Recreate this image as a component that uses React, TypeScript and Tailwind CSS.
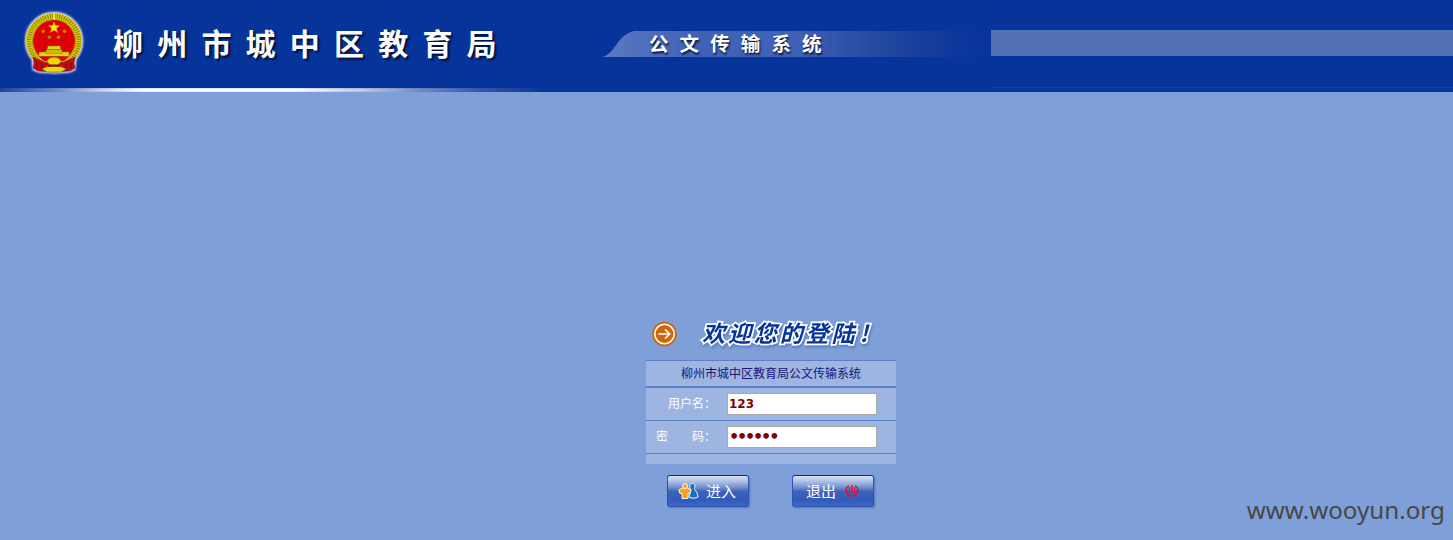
import { useState } from 'react';

const cjk = "font-['Noto_Sans_CJK_SC',sans-serif]";

function Emblem() {
  return (
    <svg width="64" height="66" viewBox="0 0 64 66" className="shrink-0">
      <defs>
        <filter id="glow" x="-20%" y="-20%" width="140%" height="140%">
          <feGaussianBlur stdDeviation="1" />
        </filter>
      </defs>
      <g fill="#fff" stroke="#fff" strokeWidth="3" filter="url(#glow)">
        <circle cx="32" cy="31" r="27.5" />
        <path d="M11 46h42l-1 13-5 2-15 1-15-1-5-2z" />
      </g>
      <circle cx="32" cy="31" r="28" fill="#d8c80c" />
      <circle cx="32" cy="31" r="25" fill="none" stroke="#8e8208" strokeWidth="4.5" strokeDasharray="1 1.400" />
      <circle cx="32" cy="31" r="21.6" fill="#f0dc10" stroke="#927b08" strokeWidth=".7" />
      <circle cx="32" cy="31" r="21" fill="#da0006" />
      <path d="M31.500 3h1.400v7h-1.400z" fill="#fff45a" />
      <path d="M32 12l1.300 3.800h4l-3.100 2.500 1.200 4L32 19.900l-3.400 2.400 1.200-4-3.100-2.500h4z" fill="#ffe900" stroke="#ffb638" strokeWidth=".6" />
      <g fill="#b78a05">
        <circle cx="21.200" cy="21.200" r="1.700" />
        <circle cx="42.500" cy="21.200" r="1.700" />
        <circle cx="27.500" cy="27.300" r="1.700" />
        <circle cx="36.500" cy="27.300" r="1.700" />
      </g>
      <path d="M26 36h12l1 3.500H25zM24 40h16v3.500H24zM17 42h30v4.500H17z" fill="#e5d20c" stroke="#8e7605" strokeWidth=".5" />
      <path d="M17 46.500h30L42 51H22z" fill="#da0006" />
      <path d="M11 47l4 2 8 3.500h18l8-3.500 4-2-1 6 1 5-5 3-16 1-16-1-5-3 1-5z" fill="#c70812" stroke="#84101d" strokeWidth=".6" />
      <path d="M15 52v7M20 54v7M44 54v7M49 52v7" stroke="#6e1231" strokeWidth="1.200" />
      <path d="M25 52a7 4.800 0 0 1 14 0l-3 2.500h-8zM20 59c6-4 18-4 24 0l-5 3H25z" fill="#ecd70c" stroke="#8e7605" strokeWidth=".6" />
      <path d="M26 56h12" stroke="#850b10" strokeWidth="1.400" />
    </svg>
  );
}

function Header() {
  return (
    <header className="flex h-[92px] flex-col bg-[#07349b]">
      <div className="flex h-[88px] items-start">
        <div className="flex w-[602px] shrink-0 items-start pl-[22px] pt-[10px]">
          <Emblem />
          <h1 className={`${cjk} ml-[27px] mt-[12px] whitespace-nowrap text-[30px] leading-[40px] font-bold tracking-[14.2px] text-white [text-shadow:2px_2px_2px_#020f3a]`}>
            柳州市城中区教育局
          </h1>
        </div>
        <div className="mt-[31px] flex h-[26px] w-[389px] shrink-0 items-start bg-[linear-gradient(90deg,#5b7ac1_0%,#3f61b6_25%,#4163b7_48%,#23489f_72%,#10399b_88%,#07349b_100%)] pl-[47px] [clip-path:path('M0_26C14_23_14_4_32_0H389V26Z')]">
          <span className={`${cjk} whitespace-nowrap text-[19.5px] leading-[24px] font-bold tracking-[11.1px] text-white [text-shadow:1px_2px_2px_#071638]`}>
            公文传输系统
          </span>
        </div>
        <div className="mt-[30px] flex h-[58px] flex-1 flex-col justify-between">
          <div className="h-[26px] bg-[#5372b6]" />
          <div className="h-px bg-[#163f9f]" />
        </div>
      </div>
      <div className="h-1 w-[545px] bg-[linear-gradient(90deg,#1c459f_0%,#6f87c4_10%,#d5dcee_20%,#ffffff_26%,#ffffff_54%,#c3cde6_66%,#6f87c4_78%,#3958a7_88%,#07349b_100%)]">
        <div className="h-full w-full bg-[linear-gradient(180deg,#07349b33_0%,#07349b00_40%,#07349b00_65%,#07349b22_100%)]" />
      </div>
    </header>
  );
}

function WelcomeTitle() {
  return (
    <div className="flex h-[42px] items-start pl-[6px]">
      <svg width="26" height="26" viewBox="0 0 26 26" className="mt-[3px] shrink-0">
        <circle cx="12.500" cy="13" r="12.300" fill="#cf650f" />
        <circle cx="12.500" cy="13" r="9.700" fill="#d0660f" stroke="#fff" strokeWidth="1.600" />
        <path d="M6.500 13h11M13 8.500l4.700 4.500-4.700 4.500" fill="none" stroke="#fff" strokeWidth="1.700" />
      </svg>
      <h2 className={`${cjk} ml-[24px] flex whitespace-nowrap text-[23px] leading-[29px] font-bold italic tracking-[2.9px] text-[#07349b] [-webkit-text-stroke:3.5px_#fff] [paint-order:stroke_fill] [filter:drop-shadow(1px_2px_1px_#5c7dc0)]`}>
        欢迎您的登陆<span className="ml-[2px]">!</span>
      </h2>
    </div>
  );
}

function EnterIcon() {
  return (
    <svg width="22" height="18" viewBox="0 0 22 18" className="shrink-0">
      <path d="M12 3.500c1-3 5-2.500 5 .5 0 2-.7 2.500-.5 3.500 2 1.500 3 4 3.500 7.500-2 1.500-7 1.500-9 0l2-7.500c-1-1-1.400-2.500-1-4z" fill="#1571bd" stroke="#f5faff" strokeWidth="1" />
      <circle cx="7" cy="4" r="2.500" fill="#ff9f16" stroke="#fff5df" />
      <path d="M4.500 6c1.500 1 3.500 1 5 0L13 8l-1 3.500-2-.5v5.500H4V11l-2 .5L.7 8z" fill="#ff9f16" stroke="#fff5df" strokeWidth="1" />
    </svg>
  );
}

function PowerIcon() {
  return (
    <svg width="14" height="12" viewBox="0 0 14 12" className="shrink-0">
      <path d="M4 1C-.5 3 .5 11 7 11s7.500-8 3-10M4.500 2v6M9.500 2v6" fill="none" stroke="#e01030" strokeWidth="1.300" />
      <path d="M7 0v9" stroke="#ff101b" strokeWidth="1.500" />
    </svg>
  );
}

const buttonClass = `${cjk} flex h-8 w-[82px] items-center rounded-[3px] border border-[#2a56b0] border-t-[#082e8a] bg-[linear-gradient(180deg,#d8e1f3_0%,#aec0e6_18%,#7894d2_36%,#3e62b7_52%,#315bbb_80%,#3c68c9_100%)] text-[15px] leading-[30px] font-normal text-white shadow-[1px_1px_2px_#5474b4]`;

export default function App() {
  const [user, setUser] = useState('123');
  const [password, setPassword] = useState('123456');
  const inputClass = "h-[22px] w-[150px] rounded-none border border-[#a9a9a9] bg-white px-px py-0 font-['DejaVu_Sans',sans-serif] font-bold text-[#800000] outline-none";
  const labelClass = `${cjk} text-[12px] leading-[20px] font-normal text-white`;

  return (
    <div className="flex h-[540px] w-full flex-col overflow-hidden bg-[#7f9fd8]">
      <Header />
      <main className="flex flex-1 items-start pt-[226px]">
        <form className="ml-[646px] flex w-[250px] shrink-0 flex-col" onSubmit={(e) => e.preventDefault()}>
          <WelcomeTitle />
          <div className="flex h-[104px] flex-col bg-[#9eb5e1]">
            <div className={`${cjk} h-[28px] border-t border-b-2 border-[#5b80c8] text-center text-[12px] leading-[24px] text-[#171779]`}>
              柳州市城中区教育局公文传输系统
            </div>
            <div className="flex h-[33px] items-start border-b border-[#5b80c8] pt-[5px]">
              <label htmlFor="user" className={`${labelClass} w-[81px] pl-[22px]`}>用户名：</label>
              <input id="user" className={`${inputClass} text-[12px]`} value={user} onChange={(e) => setUser(e.target.value)} />
            </div>
            <div className="flex h-[33px] items-start border-b border-[#5b80c8] pt-[5px]">
              <label htmlFor="password" className={`${labelClass} flex w-[81px] gap-6 pl-[10px]`}>
                <span>密</span><span>码：</span>
              </label>
              <input id="password" type="password" className={`${inputClass} text-[16px] tracking-[-2.2px]`} value={password} onChange={(e) => setPassword(e.target.value)} />
            </div>
          </div>
          <div className="flex gap-[43px] pt-[11px] pl-[21px]">
            <button type="submit" className={`${buttonClass} gap-[6px] pl-[10px]`}>
              <EnterIcon />进入
            </button>
            <button type="button" className={`${buttonClass} gap-[9px] pl-[13px]`}>
              退出<PowerIcon />
            </button>
          </div>
        </form>
        <div className="mt-[174px] mr-[8px] ml-auto font-['Noto_Sans',sans-serif] text-[24.2px] leading-[36px] text-[#474747]">
          www.wooyun.org
        </div>
      </main>
    </div>
  );
}
